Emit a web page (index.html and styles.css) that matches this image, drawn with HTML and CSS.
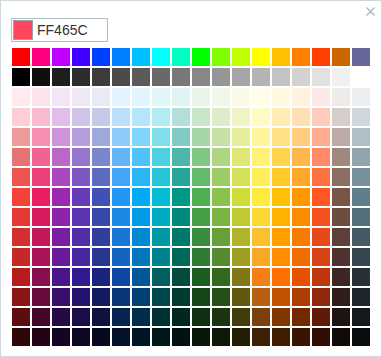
FILE: index.html
```html
<!DOCTYPE html>
<html>
<head>
<meta charset="utf-8">
<link rel="stylesheet" href="styles.css">
</head>
<body>
<div class="panel">
  <button class="close" aria-label="Close">
    <svg width="9" height="9" viewBox="0 0 9 9"><path d="M1 1L8 8M8 1L1 8" stroke="#b0bec5" stroke-width="1.6" stroke-linecap="round"/></svg>
  </button>
  <div class="field">
    <span class="current"></span>
    <span class="hex">FF465C</span>
  </div>
  <div class="grid" id="grid"></div>
</div>
<script src="app.js"></script>
</body>
</html>
```
FILE: styles.css
```css
* { box-sizing: border-box; }
html, body { margin: 0; padding: 0; background: #fff; }
body { font-family: "Liberation Sans", Arial, sans-serif; }
.panel {
  position: relative;
  width: 382px;
  height: 358px;
  border: 1px solid #cfd8dc;
  border-bottom-width: 2px;
  padding: 17px 0 0 10px;
  background: #fff;
}
.close {
  position: absolute;
  top: 6px;
  right: 6px;
  width: 9px;
  height: 9px;
  padding: 0;
  border: 0;
  background: none;
  display: flex;
}
.field {
  display: flex;
  align-items: center;
  width: 97px;
  height: 24px;
  border: 1px solid #b0bec5;
  padding: 1px;
  gap: 4px;
}
.current {
  width: 20px;
  height: 20px;
  background: #ff465c;
  border: 1px solid #9aa5ab;
}
.hex {
  font-size: 14px;
  color: #333;
  line-height: 20px;
}
.grid {
  margin-top: 6px;
  margin-left: 1px;
  display: grid;
  grid-template-columns: repeat(18, 18px);
  grid-auto-rows: 18px;
  gap: 2px;
}
.sw { width: 18px; height: 18px; }
```
FILE: app.js
```js
var rows = [
"FF0000 FF0080 C000FF 4000FF 0040FF 0080FF 00C0FF 00FFFF 00FFC0 00FF00 80FF00 C0FF00 FFFF00 FFC000 FF8000 FF4000 CC6600 666699",
"000000 0F0F0F 1E1E1E 2D2D2D 3C3C3C 4B4B4B 5A5A5A 696969 787878 878787 969696 A5A5A5 B4B4B4 C3C3C3 D2D2D2 E1E1E1 F0F0F0 FFFFFF",
"FFEBEE FCE4EC F3E5F5 EDE7F6 E8EAF6 E3F2FD E1F5FE E0F7FA E0F2F1 E8F5E9 F1F8E9 F9FBE7 FFFDE7 FFF8E1 FFF3E0 FBE9E7 EFEBE9 ECEFF1",
"FFCDD2 F8BBD0 E1BEE7 D1C4E9 C5CAE9 BBDEFB B3E5FC B2EBF2 B2DFDB C8E6C9 DCEDC8 F0F4C3 FFF9C4 FFECB3 FFE0B2 FFCCBC D7CCC8 CFD8DC",
"EF9A9A F48FB1 CE93D8 B39DDB 9FA8DA 90CAF9 81D4FA 80DEEA 80CBC4 A5D6A7 C5E1A5 E6EE9C FFF59D FFE082 FFCC80 FFAB91 BCAAA4 B0BEC5",
"E57373 F06292 BA68C8 9575CD 7986CB 64B5F6 4FC3F7 4DD0E1 4DB6AC 81C784 AED581 DCE775 FFF176 FFD54F FFB74D FF8A65 A1887F 90A4AE",
"EF5350 EC407A AB47BC 7E57C2 5C6BC0 42A5F5 29B6F6 26C6DA 26A69A 66BB6A 9CCC65 D4E157 FFEE58 FFCA28 FFA726 FF7043 8D6E63 78909C",
"F44336 E91E63 9C27B0 673AB7 3F51B5 2196F3 03A9F4 00BCD4 009688 4CAF50 8BC34A CDDC39 FFEB3B FFC107 FF9800 FF5722 795548 607D8B",
"E53935 D81B60 8E24AA 5E35B1 3949AB 1E88E5 039BE5 00ACC1 00897B 43A047 7CB342 C0CA33 FDD835 FFB300 FB8C00 F4511E 6D4C41 546E7A",
"D32F2F C2185B 7B1FA2 512DA8 303F9F 1976D2 0288D1 0097A7 00796B 388E3C 689F38 AFB42B FBC02D FFA000 F57C00 E64A19 5D4037 455A64",
"C62828 AD1457 6A1B9A 4527A0 283593 1565C0 0277BD 00838F 00695C 2E7D32 558B2F 9E9D24 F9A825 FF8F00 EF6C00 D84315 4E342E 37474F",
"B71C1C 880E4F 4A148C 311B92 1A237E 0D47A1 01579B 006064 004D40 1B5E20 33691E 827717 F57F17 FF6F00 E65100 BF360C 3E2723 263238"
];
var base = rows[rows.length - 1].split(" ");
[0.75, 0.5, 0.25].forEach(function (m) {
  rows.push(base.map(function (h) {
    var out = "";
    for (var i = 0; i < 6; i += 2) {
      var v = Math.round(parseInt(h.substr(i, 2), 16) * m);
      out += (v < 16 ? "0" : "") + v.toString(16);
    }
    return out;
  }).join(" "));
});
var grid = document.getElementById("grid");
rows.forEach(function (r) {
  r.split(" ").forEach(function (c) {
    var d = document.createElement("div");
    d.className = "sw";
    d.style.background = "#" + c;
    grid.appendChild(d);
  });
});
```
